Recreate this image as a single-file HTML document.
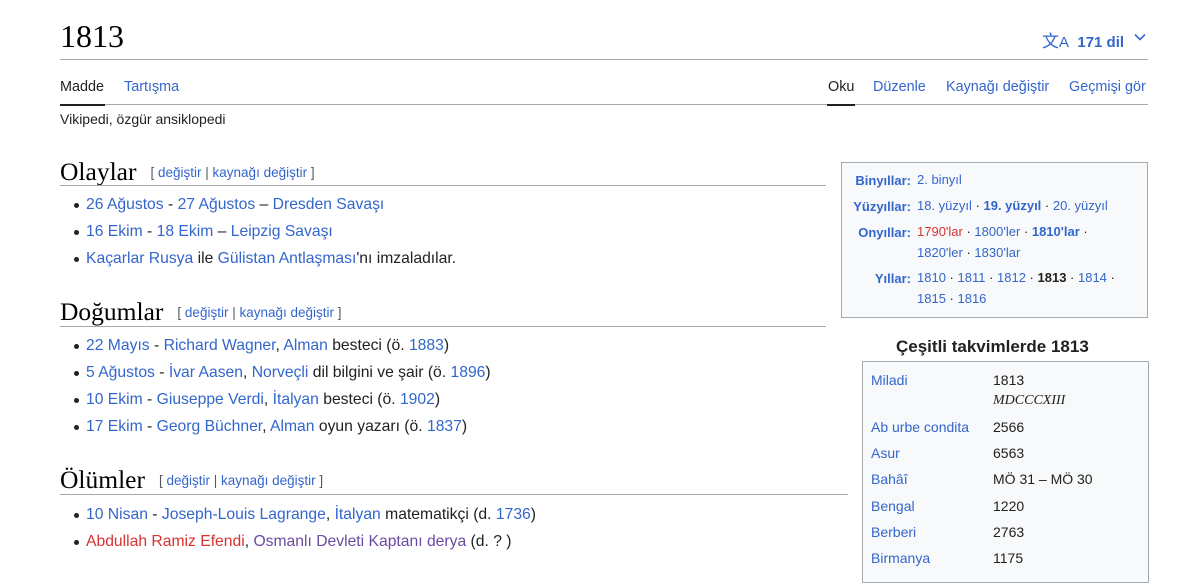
<!DOCTYPE html>
<html><head><meta charset="utf-8"><style>
body{margin:0;background:#fff;font-family:"Liberation Sans",sans-serif;color:#202122;width:1200px;height:573px;overflow:hidden;position:relative}
a{color:#3366cc;text-decoration:none}
.abs{position:absolute;white-space:nowrap}
h1{position:absolute;left:60px;top:18px;margin:0;font:400 32px "Liberation Serif",serif;color:#000}
.hr{position:absolute;height:1px;background:#a2a9b1}
.tab{font-size:14.4px;top:79px}
h2{position:absolute;left:60px;margin:0;font:400 25.5px "Liberation Serif",serif;color:#000}
h2 span{font:13.5px "Liberation Sans",sans-serif;color:#54595d;margin-left:14px;vertical-align:3px}
.li{position:absolute;left:86px;font-size:15.7px;white-space:nowrap}
.li:before{content:"";position:absolute;left:-12px;top:7px;width:5px;height:5px;border-radius:50%;background:#202122}
.red{color:#d73333}.vis{color:#6b4ba1}
.nav{position:absolute;left:841px;top:162px;width:305px;height:154px;background:#f8f9fa;border:1px solid #a2a9b1;font-size:13px}
.nav .l{position:absolute;right:236px;font-weight:bold;color:#3366cc;text-align:right;white-space:nowrap}
.nav .v{position:absolute;left:75px;white-space:nowrap;line-height:20.5px}
.cal{position:absolute;left:862px;top:361px;width:285px;height:220px;background:#f8f9fa;border:1px solid #a2a9b1;font-size:14px}
.cal .a{position:absolute;left:8px;color:#3366cc}
.cal .b{position:absolute;left:130px}
</style></head><body>
<h1>1813</h1>
<div class="abs" style="left:1042px;top:27px;font-size:15px;font-weight:bold;color:#3366cc"><span style="font-weight:400;font-size:17px">文<span style="font-size:15px">A</span></span>&nbsp; 171 dil</div>
<svg class="abs" style="left:1134px;top:33px" width="12" height="8" viewBox="0 0 12 8"><path d="M1 1.5l5 5 5-5" fill="none" stroke="#3366cc" stroke-width="1.6"/></svg>
<div class="hr" style="left:60px;top:59px;width:1088px"></div>
<div class="abs tab" style="left:60px">Madde</div>
<div class="abs tab" style="left:124px"><a>Tartışma</a></div>
<div class="abs tab" style="left:828px">Oku</div>
<div class="abs tab" style="left:873px"><a>Düzenle</a></div>
<div class="abs tab" style="left:946px"><a>Kaynağı değiştir</a></div>
<div class="abs tab" style="left:1069px"><a>Geçmişi gör</a></div>
<div class="hr" style="left:60px;top:104px;width:1088px"></div>
<div class="abs" style="left:60px;top:104px;width:45px;height:2px;background:#202122"></div>
<div class="abs" style="left:827px;top:104px;width:28px;height:2px;background:#202122"></div>
<div class="abs" style="left:60px;top:111px;font-size:14px">Vikipedi, özgür ansiklopedi</div>

<h2 style="top:157px">Olaylar<span>[ <a>değiştir</a> | <a>kaynağı değiştir</a> ]</span></h2>
<div class="hr" style="left:60px;top:185px;width:766px"></div>
<div class="li" style="top:196px"><a>26 Ağustos</a> - <a>27 Ağustos</a> – <a>Dresden Savaşı</a></div>
<div class="li" style="top:223px"><a>16 Ekim</a> - <a>18 Ekim</a> – <a>Leipzig Savaşı</a></div>
<div class="li" style="top:250px"><a>Kaçarlar</a> <a>Rusya</a> ile <a>Gülistan Antlaşması</a>'nı imzaladılar.</div>

<h2 style="top:297px">Doğumlar<span>[ <a>değiştir</a> | <a>kaynağı değiştir</a> ]</span></h2>
<div class="hr" style="left:60px;top:326px;width:766px"></div>
<div class="li" style="top:337px"><a>22 Mayıs</a> - <a>Richard Wagner</a>, <a>Alman</a> besteci (ö. <a>1883</a>)</div>
<div class="li" style="top:364px"><a>5 Ağustos</a> - <a>İvar Aasen</a>, <a>Norveçli</a> dil bilgini ve şair (ö. <a>1896</a>)</div>
<div class="li" style="top:391px"><a>10 Ekim</a> - <a>Giuseppe Verdi</a>, <a>İtalyan</a> besteci (ö. <a>1902</a>)</div>
<div class="li" style="top:418px"><a>17 Ekim</a> - <a>Georg Büchner</a>, <a>Alman</a> oyun yazarı (ö. <a>1837</a>)</div>

<h2 style="top:465px">Ölümler<span>[ <a>değiştir</a> | <a>kaynağı değiştir</a> ]</span></h2>
<div class="hr" style="left:60px;top:494px;width:788px"></div>
<div class="li" style="top:506px"><a>10 Nisan</a> - <a>Joseph-Louis Lagrange</a>, <a>İtalyan</a> matematikçi (d. <a>1736</a>)</div>
<div class="li" style="top:533px"><a class="red">Abdullah Ramiz Efendi</a>, <a class="vis">Osmanlı Devleti Kaptanı derya</a> (d. ? )</div>

<div class="nav">
<div class="l" style="top:10px">Binyıllar:</div><div class="v" style="top:7px"><a>2. binyıl</a></div>
<div class="l" style="top:36px">Yüzyıllar:</div><div class="v" style="top:33px"><a>18. yüzyıl</a> · <a style="font-weight:bold">19. yüzyıl</a> · <a>20. yüzyıl</a></div>
<div class="l" style="top:62px">Onyıllar:</div><div class="v" style="top:59px"><a class="red">1790'lar</a> · <a>1800'ler</a> · <a style="font-weight:bold">1810'lar</a> ·<br><a>1820'ler</a> · <a>1830'lar</a></div>
<div class="l" style="top:108px">Yıllar:</div><div class="v" style="top:105px"><a>1810</a> · <a>1811</a> · <a>1812</a> · <b>1813</b> · <a>1814</a> ·<br><a>1815</a> · <a>1816</a></div>
</div>

<div class="abs" style="left:896px;top:337px;font-size:17px;font-weight:bold">Çeşitli takvimlerde 1813</div>
<div class="cal">
<div class="a" style="top:10px">Miladi</div><div class="b" style="top:10px">1813</div>
<div class="b" style="top:31px;font:italic 14px 'Liberation Serif',serif">MDCCCXIII</div>
<div class="a" style="top:57px">Ab urbe condita</div><div class="b" style="top:57px">2566</div>
<div class="a" style="top:83px">Asur</div><div class="b" style="top:83px">6563</div>
<div class="a" style="top:109px">Bahâî</div><div class="b" style="top:109px">MÖ 31 – MÖ 30</div>
<div class="a" style="top:136px">Bengal</div><div class="b" style="top:136px">1220</div>
<div class="a" style="top:162px">Berberi</div><div class="b" style="top:162px">2763</div>
<div class="a" style="top:188px">Birmanya</div><div class="b" style="top:188px">1175</div>
</div>
</body></html>
